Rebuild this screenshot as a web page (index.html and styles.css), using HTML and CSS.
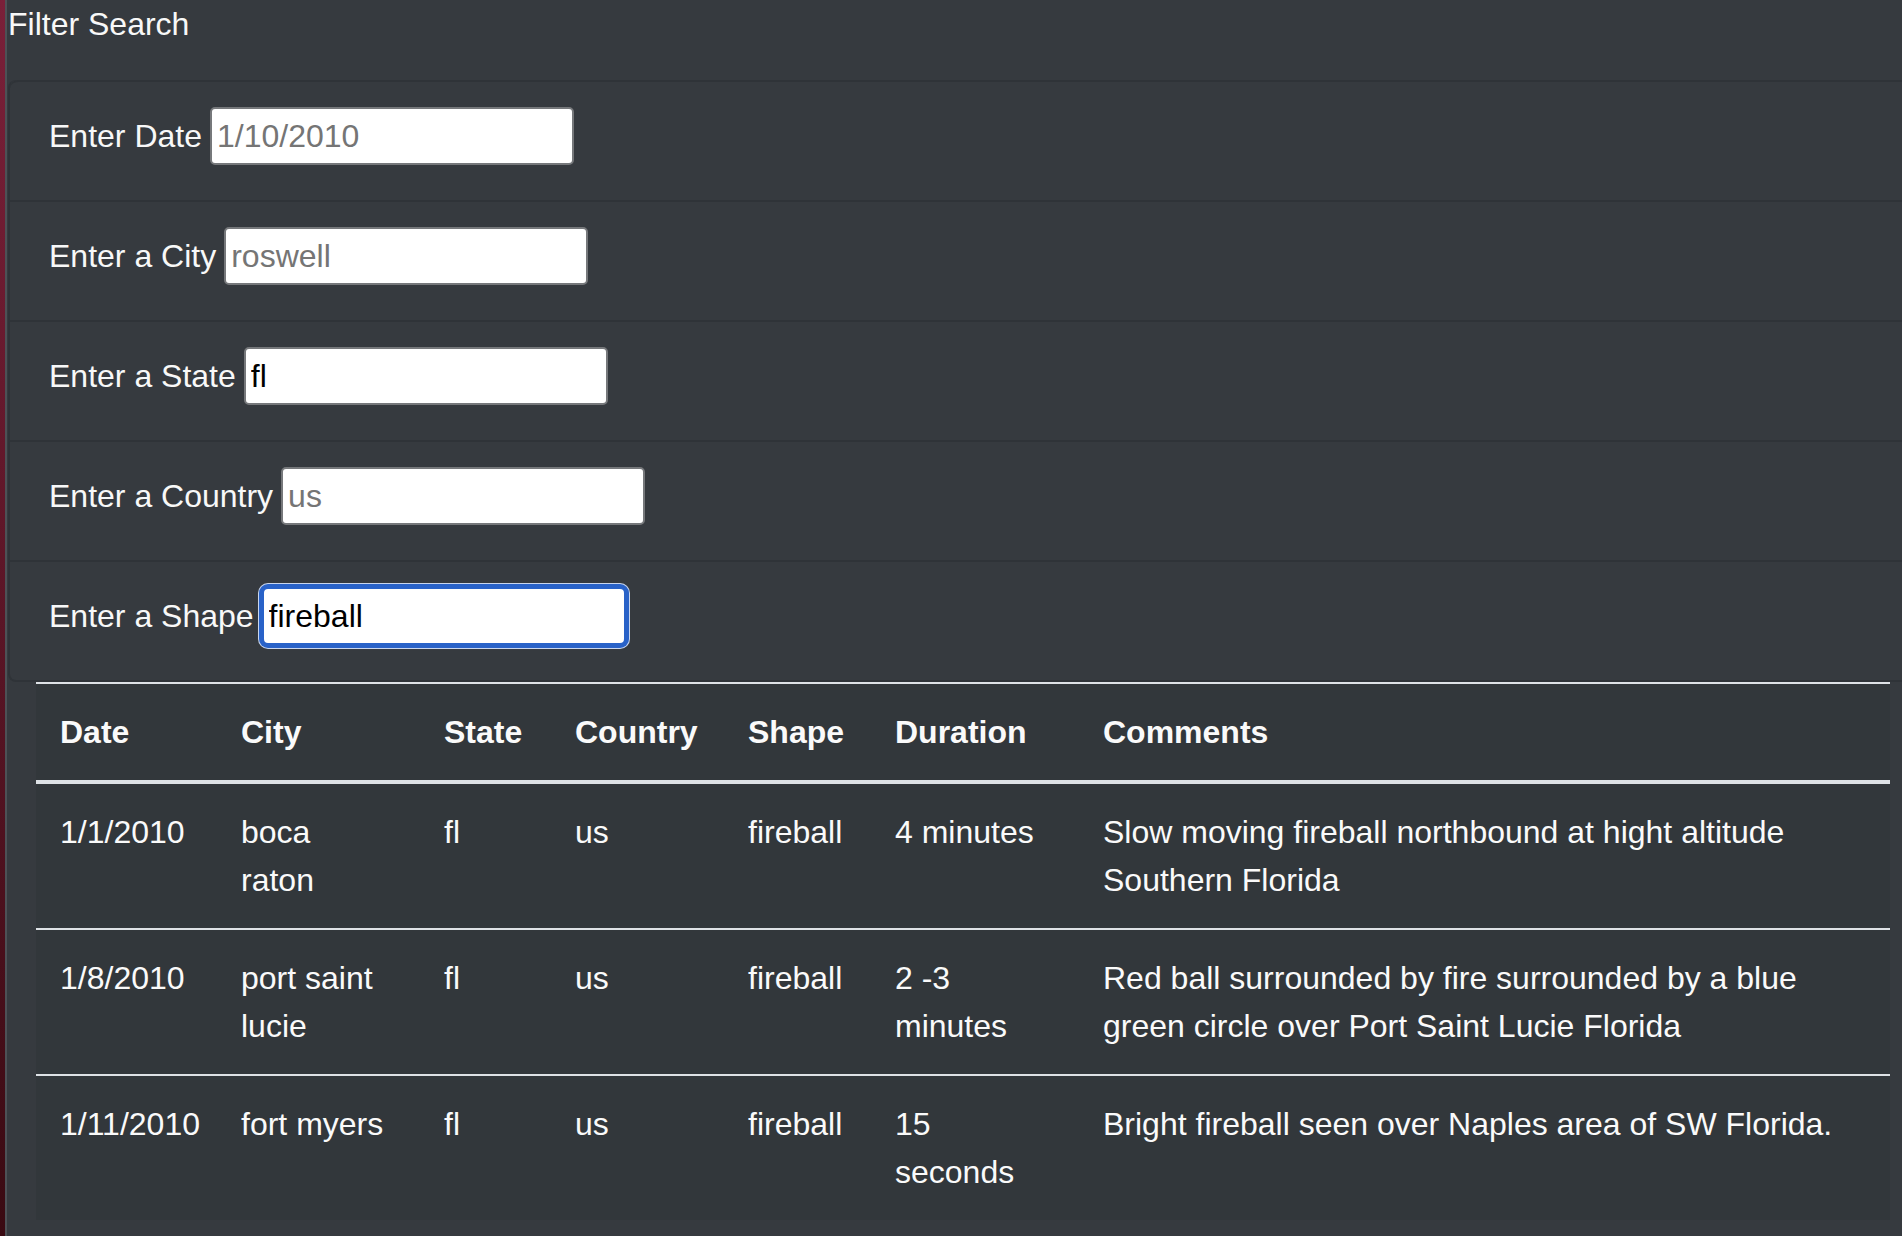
FILE: index.html
```html
<!DOCTYPE html>
<html lang="en">
<head>
<meta charset="utf-8">
<title>Filter Search</title>
<link rel="stylesheet" href="styles.css">
</head>
<body>
<div class="wallpaper"></div>
<div class="window">
  <div class="title">Filter Search</div>
  <ul class="filters">
    <li class="filter"><label class="filter-label" for="date">Enter Date</label><input class="filter-input" id="date" type="text" placeholder="1/10/2010"></li>
    <li class="filter"><label class="filter-label" for="city">Enter a City</label><input class="filter-input" id="city" type="text" placeholder="roswell"></li>
    <li class="filter"><label class="filter-label" for="state">Enter a State</label><input class="filter-input" id="state" type="text" value="fl"></li>
    <li class="filter"><label class="filter-label" for="country">Enter a Country</label><input class="filter-input" id="country" type="text" placeholder="us"></li>
    <li class="filter"><label class="filter-label" for="shape">Enter a Shape</label><input class="filter-input is-focused" id="shape" type="text" value="fireball"></li>
  </ul>
  <table class="ufo-table">
    <colgroup>
      <col class="c-date"><col class="c-city"><col class="c-state"><col class="c-country"><col class="c-shape"><col class="c-duration"><col class="c-comments">
    </colgroup>
    <thead>
      <tr><th>Date</th><th>City</th><th>State</th><th>Country</th><th>Shape</th><th>Duration</th><th>Comments</th></tr>
    </thead>
    <tbody>
      <tr><td>1/1/2010</td><td class="city">boca raton</td><td>fl</td><td>us</td><td>fireball</td><td>4 minutes</td><td>Slow moving fireball northbound at hight altitude Southern Florida</td></tr>
      <tr><td>1/8/2010</td><td class="city">port saint lucie</td><td>fl</td><td>us</td><td>fireball</td><td>2 -3 minutes</td><td>Red ball surrounded by fire surrounded by a blue green circle over Port Saint Lucie Florida</td></tr>
      <tr><td>1/11/2010</td><td class="city">fort myers</td><td>fl</td><td>us</td><td>fireball</td><td>15 seconds</td><td>Bright fireball seen over Naples area of SW Florida.</td></tr>
    </tbody>
  </table>
</div>
</body>
</html>
```
FILE: styles.css
```css
html, body {
  margin: 0;
  padding: 0;
  height: 100%;
}
body {
  display: flex;
  background: #363a3f;
  font-family: "Liberation Sans", Arial, sans-serif;
  color: #f5f5f5;
  overflow: hidden;
}
.wallpaper {
  width: 5px;
  flex: none;
  background: linear-gradient(#7a2039, #5a1526 50%, #3a0a12);
}
.window {
  flex: 1;
  min-width: 0;
  border-left: 2px solid #4d5156;
  background: #363a3f;
}
.title {
  height: 80px;
  box-sizing: border-box;
  padding: 6px 0 0 1px;
  font-size: 32px;
  line-height: 37px;
  color: #f8f8f8;
}
.filters {
  list-style: none;
  margin: 0 0 0 1px;
  padding: 0;
  border-left: 2px solid #2f3338;
  border-top-left-radius: 8px;
  border-bottom-left-radius: 8px;
  border-bottom: 2px solid #2f3338;
}
.filter {
  display: flex;
  align-items: flex-start;
  gap: 8px;
  height: 120px;
  box-sizing: border-box;
  padding: 25px 0 0 39px;
  border-top: 2px solid #2f3338;
}
.filter:first-child {
  border-top-left-radius: 8px;
}
.filter-label {
  font-size: 32px;
  line-height: 58px;
  color: #f8f8f8;
}
.filter-input {
  width: 364px;
  height: 58px;
  box-sizing: border-box;
  margin: 0;
  padding: 0 5px;
  border: 2px solid #76787b;
  border-radius: 5px;
  background: #fff;
  color: #000;
  font-family: "Liberation Sans", Arial, sans-serif;
  font-size: 32px;
  outline: none;
}
.filter-input::placeholder {
  color: #757575;
  opacity: 1;
}
.filter-input.is-focused {
  border-color: #2962c8;
  box-shadow: 0 0 0 3px #2962c8, 0 0 0 4px #c9d6ee;
  border-radius: 6px;
}
.ufo-table {
  width: 1854px;
  margin: 0 12px 0 29px;
  table-layout: fixed;
  border-collapse: collapse;
  background: #32373b;
  color: #fafafa;
  font-size: 32px;
  line-height: 48px;
}
.c-date { width: 181px; }
.c-city { width: 203px; }
.c-state { width: 131px; }
.c-country { width: 173px; }
.c-shape { width: 147px; }
.c-duration { width: 208px; }
.c-comments { width: 811px; }
.ufo-table th,
.ufo-table td {
  padding: 24px;
  text-align: left;
  vertical-align: top;
}
.ufo-table th {
  font-weight: bold;
  border-top: 2px solid #dee2e6;
  border-bottom: 4px solid #dee2e6;
}
.ufo-table td {
  border-top: 2px solid #dee2e6;
}
.ufo-table td.city {
  padding-right: 32px;
}
```
